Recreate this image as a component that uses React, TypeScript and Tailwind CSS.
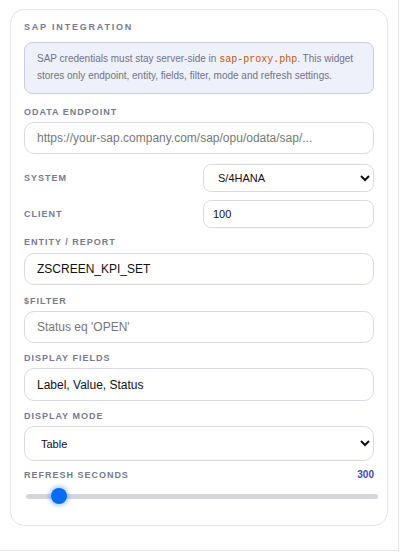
import React from 'react';

const labelCls = 'block text-[9px] font-bold uppercase tracking-[0.11em] text-[#767a8c] leading-3';
const inputCls =
  'w-full rounded-[10px] border border-[#d9dae3] bg-white px-3 text-[12px] text-[#111] placeholder:text-[#777] outline-none';

export default function App() {
  return (
    <div className="w-[399px] h-[551px] border-r border-b border-[#e3e4ea] bg-white pl-2.5 pr-2.5 pt-[9px] font-['Liberation_Sans',Arial,sans-serif]">
      <div className="rounded-[14px] border border-[#e3e4ea] bg-white px-[13px] pt-[11px] pb-[21px]">
        <h2 className="text-[9px] font-bold uppercase tracking-[0.2em] text-[#767a8c] leading-3">SAP Integration</h2>

        <div className="mt-[9px] rounded-lg border border-[#c9cce6] bg-[#eef0fa] px-3 pt-[8px] pb-[9px] text-[10px] leading-4 text-[#707585]">
          SAP credentials must stay server-side in{' '}
          <code className="font-['Liberation_Mono',monospace] text-[10px] text-[#c0580e]">sap-proxy.php</code>. This widget stores only endpoint, entity, fields, filter, mode and refresh settings.
        </div>

        <div className="mt-[12px]">
          <label className={labelCls}>OData Endpoint</label>
          <input className={inputCls + ' mt-[4px] h-8'} placeholder="https://your-sap.company.com/sap/opu/odata/sap/..." />
        </div>

        <div className="mt-[10px] grid grid-cols-2 gap-x-2 gap-y-2 items-center">
          <label className={labelCls}>System</label>
          <select defaultValue="S/4HANA" className="h-7 w-full rounded-[8px] border border-[#d9dae3] bg-white pl-2.5 pr-1 text-[11px] text-[#111] outline-none">
            <option>S/4HANA</option>
            <option>ECC</option>
            <option>BW/4HANA</option>
          </select>
          <label className={labelCls}>Client</label>
          <input defaultValue="100" className="h-7 w-full rounded-[8px] border border-[#d9dae3] bg-white px-[9px] text-[11px] text-[#111] outline-none" />
        </div>

        <div className="mt-[8px]">
          <label className={labelCls}>Entity / Report</label>
          <input className={inputCls + ' mt-[5px] h-8'} defaultValue="ZSCREEN_KPI_SET" />
        </div>

        <div className="mt-[10px]">
          <label className={labelCls}>$filter</label>
          <input className={inputCls + ' mt-[4px] h-8'} placeholder="Status eq 'OPEN'" />
        </div>

        <div className="mt-[9px]">
          <label className={labelCls}>Display Fields</label>
          <input className={inputCls + ' mt-[4px] h-[33px]'} defaultValue="Label, Value, Status" />
        </div>

        <div className="mt-[9px]">
          <label className={labelCls}>Display Mode</label>
          <select defaultValue="Table" className="mt-[4px] h-[35px] w-full rounded-[10px] border border-[#d9dae3] bg-white pl-[12px] pr-1 text-[11px] text-[#111] outline-none">
            <option>Table</option>
            <option>Cards</option>
            <option>Chart</option>
          </select>
        </div>

        <div className="mt-[8px]">
          <div className="flex items-center justify-between">
            <label className={labelCls}>Refresh Seconds</label>
            <span className="text-[10px] font-bold text-[#4b3fc0] leading-3">300</span>
          </div>
          <input
            type="range"
            min={30}
            max={3600}
            defaultValue={300}
            className="mt-[7px] block h-4 w-[352px] ml-[2px] cursor-pointer appearance-none bg-transparent [&::-webkit-slider-runnable-track]:h-[5px] [&::-webkit-slider-runnable-track]:rounded-full [&::-webkit-slider-runnable-track]:bg-[#d5d5de] [&::-webkit-slider-thumb]:-mt-[5.5px] [&::-webkit-slider-thumb]:h-4 [&::-webkit-slider-thumb]:w-4 [&::-webkit-slider-thumb]:appearance-none [&::-webkit-slider-thumb]:rounded-full [&::-webkit-slider-thumb]:bg-[#0a6cf2] [&::-webkit-slider-thumb]:shadow-[0_0_4px_2px_rgba(10,108,242,0.35)]"
          />
        </div>
      </div>
    </div>
  );
}
